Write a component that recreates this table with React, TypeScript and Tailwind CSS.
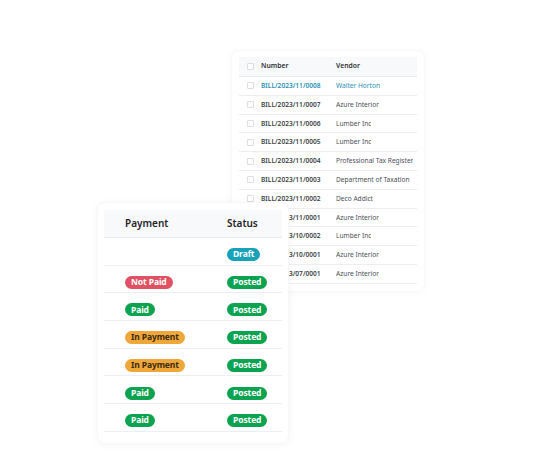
const bills = [
  { number: "BILL/2023/11/0008", vendor: "Walter Horton", link: true },
  { number: "BILL/2023/11/0007", vendor: "Azure Interior" },
  { number: "BILL/2023/11/0006", vendor: "Lumber Inc" },
  { number: "BILL/2023/11/0005", vendor: "Lumber Inc" },
  { number: "BILL/2023/11/0004", vendor: "Professional Tax Register" },
  { number: "BILL/2023/11/0003", vendor: "Department of Taxation" },
  { number: "BILL/2023/11/0002", vendor: "Deco Addict" },
  { number: "BILL/2023/11/0001", vendor: "Azure Interior" },
  { number: "BILL/2023/10/0002", vendor: "Lumber Inc" },
  { number: "BILL/2023/10/0001", vendor: "Azure Interior" },
  { number: "BILL/2023/07/0001", vendor: "Azure Interior" },
];

type Tone = "teal" | "red" | "green" | "orange";

const toneClass: Record<Tone, string> = {
  teal: "bg-[#17a2b8] text-white",
  red: "bg-[#e05263] text-white",
  green: "bg-[#0ba350] text-white",
  orange: "bg-[#f0a73a] text-[#3a2a10]",
};

const payments: { payment?: [string, Tone]; status: [string, Tone] }[] = [
  { status: ["Draft", "teal"] },
  { payment: ["Not Paid", "red"], status: ["Posted", "green"] },
  { payment: ["Paid", "green"], status: ["Posted", "green"] },
  { payment: ["In Payment", "orange"], status: ["Posted", "green"] },
  { payment: ["In Payment", "orange"], status: ["Posted", "green"] },
  { payment: ["Paid", "green"], status: ["Posted", "green"] },
  { payment: ["Paid", "green"], status: ["Posted", "green"] },
];

function Badge({ label, tone }: { label: string; tone: Tone }) {
  return (
    <span
      className={`inline-flex h-[13px] items-center rounded-full px-[6px] text-[8.5px] font-bold leading-none tracking-[-0.1px] ${toneClass[tone]}`}
    >
      {label}
    </span>
  );
}

function Checkbox() {
  return <span className="block h-[7px] w-[7px] rounded-[1px] border border-[#dcdee2] bg-white" />;
}

export default function App() {
  return (
    <div
      className="relative h-[466px] w-[536px] overflow-hidden bg-white"
      style={{ fontFamily: '"Noto Sans", "Open Sans", sans-serif' }}
    >
      {/* bills list, behind */}
      <div className="absolute left-[231px] top-[50px] w-[194px] rounded-[8px] border border-[#f7f8f9] bg-white px-[7px] pt-[6px] pb-[7px] shadow-[0_1px_8px_rgba(0,0,0,0.03)]">
        <div className="flex h-[20px] items-center border-b border-[#e8eaed] bg-[#f8f9fa] text-[6.8px] font-semibold text-[#2b2f33]">
          <div className="flex w-[22px] justify-center pl-[1px]">
            <Checkbox />
          </div>
          <div className="w-[75px]">Number</div>
          <div>Vendor</div>
        </div>
        {bills.map((b) => (
          <div
            key={b.number}
            className="flex h-[18.8px] items-center border-b border-[#eceef0] text-[6.6px]"
          >
            <div className="flex w-[22px] justify-center pl-[1px]">
              <Checkbox />
            </div>
            <div className={`w-[75px] font-semibold ${b.link ? "text-[#1f8fb4]" : "text-[#3a3f44]"}`}>
              {b.number}
            </div>
            <div className={`truncate ${b.link ? "text-[#1f8fb4]" : "text-[#4a4f55]"}`}>{b.vendor}</div>
          </div>
        ))}
      </div>

      {/* payment / status, in front */}
      <div className="absolute left-[97px] top-[202px] w-[192px] rounded-[8px] border border-[#f6f7f8] bg-white px-[6px] pt-[7px] pb-[11px] shadow-[0_1px_10px_rgba(0,0,0,0.045)]">
        <div className="flex h-[28px] items-center border-b border-[#e8eaed] bg-[#f8f9fa] text-[10px] font-semibold text-[#1f2327]">
          <div className="w-[123px] pl-[21px]">Payment</div>
          <div>Status</div>
        </div>
        {payments.map((p, i) => (
          <div key={i} className="flex h-[27.7px] items-center border-b border-[#eceef0]">
            <div className="w-[123px] pl-[21px]">
              {p.payment ? <Badge label={p.payment[0]} tone={p.payment[1]} /> : null}
            </div>
            <div>
              <Badge label={p.status[0]} tone={p.status[1]} />
            </div>
          </div>
        ))}
      </div>
    </div>
  );
}
